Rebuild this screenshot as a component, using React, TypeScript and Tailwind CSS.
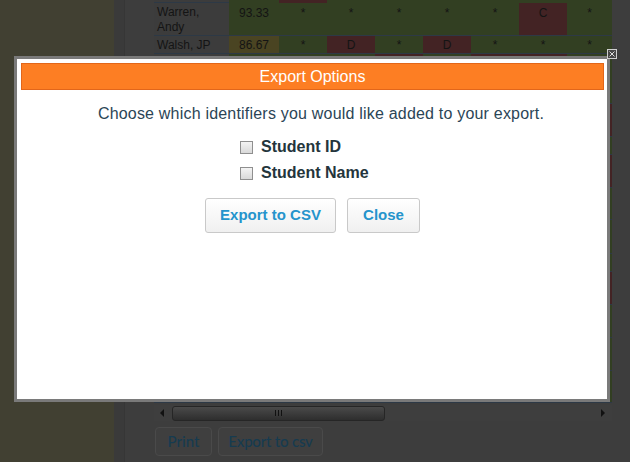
const G = '#323f22';
const R = '#432324';
const Y = '#4a4422';

type Row = { h: number; name?: string; score?: string; scoreBg?: string; cells: string[]; marks?: string[]; valign?: 'top' | 'middle' };

const rows: Row[] = [
  { h: 3, cells: [R, G, G, G, G, G, G] },
  { h: 33, name: 'Warren, Andy', score: '93.33', scoreBg: G, cells: [G, G, G, G, G, R, G], marks: ['*', '*', '*', '*', '*', 'C', '*'], valign: 'top' },
  { h: 18, name: 'Walsh, JP', score: '86.67', scoreBg: Y, cells: [G, R, G, R, G, G, G], marks: ['*', 'D', '*', 'D', '*', '*', '*'], valign: 'middle' },
  { h: 50, cells: [G, G, R, G, R, R, G] },
  { h: 33, cells: [G, G, G, G, G, G, R] },
  { h: 18, cells: [G, G, G, G, G, G, G] },
  { h: 33, cells: [G, G, G, G, G, G, R] },
  { h: 32, cells: [G, G, G, G, G, G, G] },
  { h: 34, cells: [G, G, G, G, G, G, G] },
  { h: 18, cells: [G, G, G, G, G, G, G] },
  { h: 33, cells: [G, G, G, G, G, G, R] },
  { h: 33, cells: [G, G, G, G, G, G, G] },
  { h: 33, cells: [G, G, G, G, G, G, G] },
  { h: 32, cells: [G, G, G, G, G, G, G] },
];

const widths = [48, 48, 48, 48, 48, 48, 45];

function GradeRow({ row }: { row: Row }) {
  const pad = row.valign === 'middle' ? 'items-center' : 'items-start pt-[3px]';
  return (
    <div className="flex border-b border-[#2d3946]" style={{ height: row.h }}>
      <div className="w-[75px] shrink-0 bg-[#3c3c3c] px-[3px] pt-[2px] text-[12px] leading-[15px] text-[#141414]">
        {row.name}
      </div>
      <div
        className={`w-[50px] shrink-0 flex justify-center text-[12px] leading-[14px] text-[#141414] ${pad}`}
        style={{ backgroundColor: row.scoreBg ?? G }}
      >
        {row.score}
      </div>
      {row.cells.map((c, i) => (
        <div
          key={i}
          className={`shrink-0 flex justify-center text-[12px] leading-[14px] text-[#141414] ${pad}`}
          style={{ width: widths[i], backgroundColor: c }}
        >
          {row.marks?.[i]}
        </div>
      ))}
    </div>
  );
}

function Checkbox() {
  return (
    <span className="w-[13px] h-[13px] border border-[#8f8f8f] bg-gradient-to-b from-[#f4f4f4] to-[#d9d9d9] shrink-0" />
  );
}

export default function App() {
  return (
    <div className="relative w-[630px] h-[462px] overflow-hidden flex font-['Liberation_Sans',Arial,sans-serif]">
      {/* page behind the modal, dimmed */}
      <div className="w-[114px] shrink-0 bg-[#414032]" />
      <div className="w-[11px] shrink-0 bg-[#3a3a3a] border-r border-[#363636]" />
      <div className="flex-1 bg-[#3d3d3d] pl-[29px] flex flex-col">
        <div className="w-[458px]">
          {rows.map((r, i) => (
            <GradeRow key={i} row={r} />
          ))}
        </div>

        {/* horizontal scrollbar */}
        <div className="w-[458px] h-[16px] mt-[2px] flex items-center bg-[#3e3e3e]">
          <span className="ml-[6px] w-0 h-0 border-y-[4px] border-y-transparent border-r-[4px] border-r-[#111]" />
          <div className="ml-[8px] w-[213px] h-[15px] rounded-[3px] border border-[#262626] bg-gradient-to-b from-[#4a4a4a] to-[#2e2e2e] flex items-center justify-center gap-[2px]">
            <span className="w-px h-[6px] bg-[#111]" />
            <span className="w-px h-[6px] bg-[#111]" />
            <span className="w-px h-[6px] bg-[#111]" />
          </div>
          <span className="ml-auto mr-[7px] w-0 h-0 border-y-[4px] border-y-transparent border-l-[4px] border-l-[#111]" />
        </div>

        <div className="flex gap-[6px] mt-[6px] ml-[1px] font-['Lato',sans-serif]">
          <div className="w-[57px] h-[29px] rounded-[4px] border border-[#4a4a4a] bg-[#3f3f3f] flex items-center justify-center text-[15px] font-medium text-[#163b50]">
            Print
          </div>
          <div className="w-[105px] h-[29px] rounded-[4px] border border-[#4a4a4a] bg-[#3f3f3f] flex items-center justify-center text-[15px] font-medium tracking-[-0.2px] text-[#163b50]">
            Export to csv
          </div>
        </div>
      </div>

      {/* modal */}
      <div className="absolute left-[14px] top-[56px] w-[596px] h-[346px] border-[3px] border-[#7a7a7a] bg-white pt-[4px] pl-[4px] pr-[3px]">
        <div className="h-[27px] bg-[#fd7e23] border border-[#e2661a] text-white text-[16px] leading-[25px] text-center">
          Export Options
        </div>
        <p className="mt-[15px] pl-[17px] text-[16px] leading-[18px] tracking-[0.2px] text-center text-[#2b4556]">
          Choose which identifiers you would like added to your export.
        </p>
        <div className="ml-[219px] mt-[14px] flex flex-col gap-[6px]">
          <label className="flex items-center gap-[8px] h-[20px] text-[16px] font-bold text-[#24353c]">
            <Checkbox />
            Student ID
          </label>
          <label className="flex items-center gap-[8px] h-[20px] text-[16px] font-bold text-[#24353c]">
            <Checkbox />
            Student Name
          </label>
        </div>
        <div className="mt-[15px] flex justify-center gap-[11px]">
          <button className="w-[131px] h-[35px] rounded-[3px] border border-[#c9c9c9] bg-gradient-to-b from-white to-[#f0f0f0] text-[15px] font-bold text-[#2594cc]">
            Export to CSV
          </button>
          <button className="w-[73px] h-[35px] rounded-[3px] border border-[#c9c9c9] bg-gradient-to-b from-white to-[#f0f0f0] text-[15px] font-bold text-[#2594cc]">
            Close
          </button>
        </div>
      </div>

      {/* modal close box */}
      <svg className="absolute left-[607px] top-[49px]" width="10" height="10" viewBox="0 0 10 10">
        <rect x="0.5" y="0.5" width="9" height="9" fill="#474747" stroke="#cfcfcf" />
        <path d="M2.5 2.5 L7.5 7.5 M7.5 2.5 L2.5 7.5" stroke="#dcdcdc" strokeWidth="1" />
      </svg>
    </div>
  );
}
